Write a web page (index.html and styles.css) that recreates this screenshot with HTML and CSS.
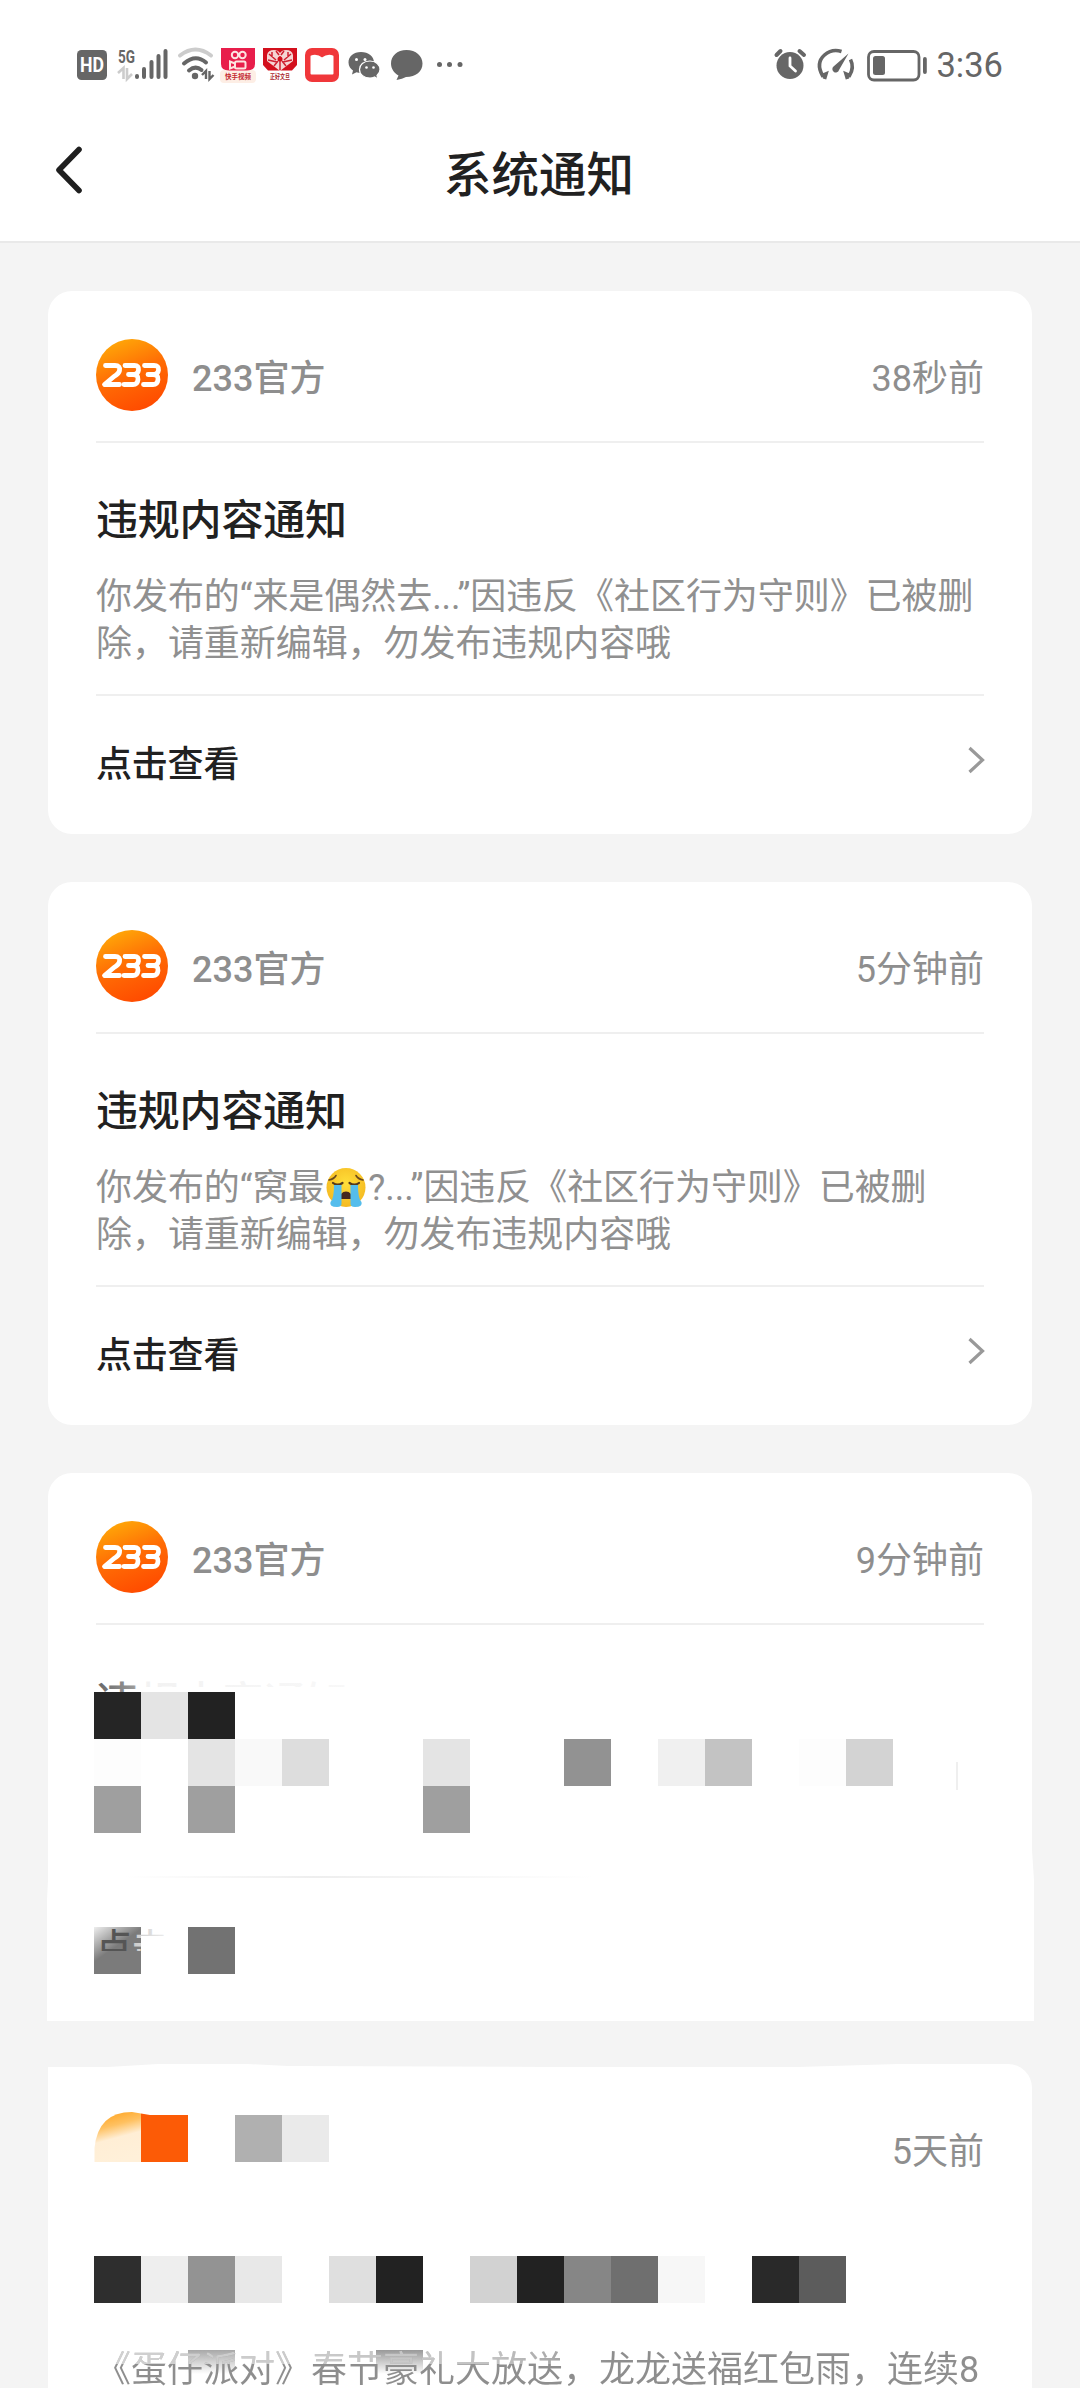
FILE: index.html
```html
<!DOCTYPE html>
<html lang="zh-CN">
<head>
<meta charset="utf-8">
<title>系统通知</title>
<link rel="stylesheet" href="styles.css">
</head>
<body>
<svg width="0" height="0" class="defs" aria-hidden="true">
  <defs>
    <linearGradient id="sun" x1="0.2" y1="0" x2="0.6" y2="1">
      <stop offset="0" stop-color="#ffac08"/><stop offset="0.5" stop-color="#ff6d05"/><stop offset="1" stop-color="#ff4b00"/>
    </linearGradient>
    <symbol id="logo" viewBox="0 0 72 72">
      <circle cx="36" cy="36" r="36" fill="url(#sun)"/>
      <g fill="none" stroke="#fff" stroke-width="4.800" stroke-linejoin="round" stroke-linecap="round">
        <path d="M9.500 26.500H19Q24.500 26.500 23.500 31.500Q23 34.500 18 37.500L8.500 45.500H23.500"/>
        <path d="M29 26.500H38.500Q43 26.500 42.500 31Q42 35.500 37 35.500H32.500M37 35.500Q42.500 35.500 42 40.500Q41.500 45.500 37 45.500H28"/>
        <path d="M48.500 26.500H58Q63 26.500 62.500 31Q62 35.500 57 35.500H52M57 35.500Q62.500 35.500 62 40.500Q61.500 45.500 57 45.500H47.500"/>
      </g>
    </symbol>
    <symbol id="next" viewBox="0 0 18 28"><path d="M2.500 2L15.500 14L2.500 26" fill="none" stroke="#999" stroke-width="3.200"/></symbol>
  </defs>
</svg>

<header class="top">
  <div class="status">
    <svg class="status-left" width="400" height="48" viewBox="72 40 400 48">
      <rect x="77" y="50" width="30" height="30" rx="4.500" fill="#666"/>
      <text x="92" y="71.500" class="hd" textLength="24" lengthAdjust="spacingAndGlyphs">HD</text>
      <text x="118" y="63" class="net" textLength="17" lengthAdjust="spacingAndGlyphs">5G</text>
      <path d="M118 73L123.500 68V79M127 68V79L132 74" fill="none" stroke="#ccc" stroke-width="2.600"/>
      <g stroke="#666" stroke-width="4" stroke-linecap="round">
        <path d="M137 76V77M144 69V77M151.500 62V77M158.500 56V77M165.500 51V77"/>
      </g>
      <g fill="none" stroke-width="4" stroke-linecap="round">
        <path d="M180 55.500Q195.500 43.500 211 55.500" stroke="#ccc"/>
        <path d="M184 63.500Q195.500 53.500 206 62.500" stroke="#666"/>
        <path d="M189 70.500Q195.500 65 201.500 70" stroke="#666"/>
      </g>
      <circle cx="195" cy="76" r="3.200" fill="#666"/>
      <path d="M202 75L206 71V79M209.500 71V79L213.500 75" fill="none" stroke="#666" stroke-width="2.400"/>

      <rect x="220" y="70" width="36" height="13" rx="4" fill="#fdeee5"/>
      <path d="M221 48H255V64Q255 70.500 247 70.500H229Q221 70.500 221 64Z" fill="#e81e4b"/>
      <g fill="none" stroke="#fde3e0" stroke-width="2">
        <circle cx="235" cy="55" r="3.200"/><circle cx="242.500" cy="55" r="3.200"/>
        <rect x="235" y="61.500" width="10.500" height="7" rx="1.500"/><path d="M235 63.500L230 61.500V68.500L235 66.500"/>
      </g>
      <text x="238" y="78.500" class="tiny red" textLength="26" lengthAdjust="spacingAndGlyphs">快手视频</text>

      <path d="M263 48H297V65L292 70.500H268L263 65Z" fill="#d3101d"/>
      <path d="M280 71L267 61V55Q268 50 274 50Q278 50 280 53Q282 50 286 50Q292 50 293 55V61Z" fill="#f5d5d3"/>
      <path d="M269 54L276 60M276 51L279 55M291 54L284 60M284 51L281 55M268 60L277 62M292 60L283 62M274 66L278 61M286 66L282 61M280 56V70M272 52V57M288 52V57" stroke="#cf2030" stroke-width="1.500" fill="none"/>
      <circle cx="280" cy="59" r="2.500" fill="#d3101d"/>
      <text x="280" y="78.500" class="tiny dark" textLength="20" lengthAdjust="spacingAndGlyphs">正好文旦</text>

      <rect x="305" y="48" width="34" height="34" rx="7" fill="#f0373a"/>
      <path d="M311.500 56.500Q316.500 54.500 322 58.500Q328 54.500 332.500 56.500V73.500H311.500Z" fill="#fff" stroke="#fff" stroke-width="2" stroke-linejoin="round"/>

      <path d="M361 52C353.500 52 348.500 56.500 348.500 62.500C348.500 66 350.500 69 353 70.500L352 74.500L356.500 72.200Q359 73 361.500 72.800C369 72.500 374 68 374 62.500C374 56.500 368.500 52 361 52Z" fill="#666"/>
      <path d="M370 61C363.500 61 359.500 65 359.500 69.500C359.500 74.500 364 78 370 78Q372.500 78 374.500 77L378 79L377 75.500Q380 73 380 69.500C380 65 376 61 370 61Z" fill="#666" stroke="#fff" stroke-width="1.200"/>
      <g fill="#fff"><circle cx="356.500" cy="59.500" r="1.500"/><circle cx="365" cy="59.500" r="1.500"/><circle cx="366.500" cy="67.500" r="1.300"/><circle cx="373.500" cy="67.500" r="1.300"/></g>
      <path d="M406.500 50C397 50 391 56 391 63.500C391 68.500 394 73 398.500 75.500L396.500 80Q402.500 79 406 77C416 77 422.500 71.500 422.500 63.500C422.500 56 416 50 406.500 50Z" fill="#666"/>
      <g fill="#666"><circle cx="439.500" cy="64.500" r="2.500"/><circle cx="449.500" cy="64.500" r="2.500"/><circle cx="460" cy="64.500" r="2.500"/></g>
    </svg>
    <div class="status-right">
      <svg width="160" height="40" viewBox="770 45 160 40">
        <circle cx="791" cy="65.500" r="13.500" fill="#666"/>
        <path d="M777.500 55L781.500 51M800.500 51L805 55" stroke="#666" stroke-width="4" stroke-linecap="round"/>
        <path d="M791 58V66L796.500 71" fill="none" stroke="#fff" stroke-width="2.800" stroke-linecap="round"/>
        <g fill="none" stroke="#666" stroke-width="3.600">
          <path d="M825.500 79L827 74L823.500 75.500Q816.500 63 825.500 55Q833 48.500 842.500 51.500"/>
          <path d="M851.500 59.500Q855.500 67.500 850.500 75.500L847 74L848.500 79"/>
        </g>
        <path d="M849.500 53.500L840 70A3.400 3.400 0 1 1 834.500 66.500Z" fill="#666"/>
        <rect x="869.500" y="51.500" width="50.500" height="28.500" rx="5.500" fill="none" stroke="#666" stroke-width="2.800"/>
        <rect x="874" y="56" width="12" height="19" rx="2.500" fill="#666"/>
        <rect x="924" y="57" width="3.800" height="17" rx="1.900" fill="#666"/>
      </svg>
      <span class="clock">3:36</span>
    </div>
  </div>
  <div class="nav">
    <svg class="back" width="36" height="56" viewBox="0 0 36 56"><path d="M29 7.500L9 28L29 48.500" fill="none" stroke="#1f1f1f" stroke-width="5.600" stroke-linecap="round" stroke-linejoin="round"/></svg>
    <h1>系统通知</h1>
  </div>
</header>

<main class="list">
  <article class="card">
    <div class="head"><svg class="avatar"><use href="#logo"/></svg><span class="name">233官方</span><time>38秒前</time></div>
    <div class="body">
      <h2>违规内容通知</h2>
      <p>你发布的“来是偶然去...”因违反《社区行为守则》已被删<br>除，请重新编辑，勿发布违规内容哦</p>
    </div>
    <div class="action"><span>点击查看</span><svg class="next"><use href="#next"/></svg></div>
  </article>

  <article class="card">
    <div class="head"><svg class="avatar"><use href="#logo"/></svg><span class="name">233官方</span><time>5分钟前</time></div>
    <div class="body">
      <h2>违规内容通知</h2>
      <p>你发布的“窝最<svg class="emoji" viewBox="0 0 40 40" role="img" aria-label="大哭">
        <defs><radialGradient id="face" cx="0.5" cy="0.4" r="0.6"><stop offset="0" stop-color="#ffdf3a"/><stop offset="1" stop-color="#f5b921"/></radialGradient></defs>
        <circle cx="20" cy="19.500" r="19.500" fill="url(#face)"/>
        <path d="M3 12Q8 11 10 7.500M37 12Q32 11 30 7.500" fill="none" stroke="#6b4a1c" stroke-width="1.600" stroke-linecap="round"/>
        <path d="M7 15Q11.500 18.500 16.500 15M23.500 15Q28.500 18.500 33 15" fill="none" stroke="#54391c" stroke-width="2.200" stroke-linecap="round"/>
        <path d="M14 31Q14 23.500 20 23.500Q26 23.500 26 31Z" fill="#46281e"/>
        <path d="M8 17H15.500V35Q16 39 11 39Q3 39 4.500 34Q8 31 8 17ZM32 17H24.500V35Q24 39 29 39Q37 39 35.500 34Q32 31 32 17Z" fill="#55bdec"/>
      </svg>?...”因违反《社区行为守则》已被删<br>除，请重新编辑，勿发布违规内容哦</p>
    </div>
    <div class="action"><span>点击查看</span><svg class="next"><use href="#next"/></svg></div>
  </article>

  <article class="card masked">
    <div class="head"><svg class="avatar"><use href="#logo"/></svg><span class="name">233官方</span><time>9分钟前</time></div>
    <svg class="mosaic" width="987" height="397" viewBox="47 1624 987 397">
      <defs>
        <linearGradient id="fadeTitle" gradientUnits="userSpaceOnUse" x1="96" y1="0" x2="350" y2="0">
          <stop offset="0" stop-color="#666"/><stop offset="0.150" stop-color="#999"/><stop offset="0.170" stop-color="#f2f2f2"/><stop offset="1" stop-color="#f8f8f8"/>
        </linearGradient>
        <linearGradient id="fadeAction" gradientUnits="userSpaceOnUse" x1="96" y1="0" x2="168" y2="0">
          <stop offset="0" stop-color="#555"/><stop offset="0.480" stop-color="#555"/><stop offset="0.520" stop-color="#ccc"/><stop offset="1" stop-color="#eee"/>
        </linearGradient>
        <linearGradient id="fadeTile" x1="0" y1="0" x2="0.350" y2="0.500"><stop offset="0" stop-color="#eee"/><stop offset="1" stop-color="#7b7b7b"/></linearGradient>
        <linearGradient id="fadeLine"><stop offset="0" stop-color="#fff"/><stop offset="0.400" stop-color="#eee"/><stop offset="1" stop-color="#fff"/></linearGradient>
        <clipPath id="cutTitle"><path d="M90 1670H350V1687H137V1692H90Z"/></clipPath>
        <clipPath id="cutAction"><path d="M90 1920H180V1936H141V1951H90Z"/></clipPath>
      </defs>
      <path d="M48 1624H1032V1850L1034 1880V2021H47V1900L48 1880Z" fill="#fff"/>
      <text x="96" y="1717" class="ghost-title" fill="url(#fadeTitle)" clip-path="url(#cutTitle)">违规内容通知</text>
      <g shape-rendering="crispEdges">
        <path d="M94 1692h47v47h-47z" fill="#252525"/><path d="M141 1692h47v47h-47z" fill="#e4e4e4"/><path d="M188 1692h47v47h-47z" fill="#222"/>
        <path d="M94 1739h47v47h-47zM799 1739h47v47h-47z" fill="#fdfdfd"/><path d="M188 1739h47v47h-47zM423 1739h47v47h-47z" fill="#e4e4e4"/>
        <path d="M235 1739h47v47h-47z" fill="#f9f9f9"/><path d="M282 1739h47v47h-47z" fill="#ddd"/><path d="M564 1739h47v47h-47z" fill="#929292"/>
        <path d="M658 1739h47v47h-47z" fill="#f0f0f0"/><path d="M705 1739h47v47h-47z" fill="#c3c3c3"/><path d="M846 1739h47v47h-47z" fill="#d3d3d3"/>
        <path d="M94 1786h47v47h-47zM188 1786h47v47h-47zM423 1786h47v47h-47z" fill="#9f9f9f"/>
        <path d="M94 1927h47v47h-47z" fill="url(#fadeTile)"/><path d="M188 1927h47v47h-47z" fill="#727272"/>
      </g>
      <path d="M956 1762h2v28h-2z" fill="#efefef"/>
      <path d="M125 1876h470v2h-470z" fill="url(#fadeLine)"/>
      <text x="96" y="1960" class="ghost-action" fill="url(#fadeAction)" clip-path="url(#cutAction)">点击</text>
    </svg>
  </article>

  <article class="card last">
    <div class="head">
      <svg class="mosaic-head" width="240" height="56" viewBox="94 2111 240 56">
        <defs>
          <linearGradient id="fadeAvatar" x1="0.200" y1="0" x2="0.450" y2="1"><stop offset="0" stop-color="#ffa21c"/><stop offset="0.300" stop-color="#ffc161"/><stop offset="0.550" stop-color="#ffeed5"/><stop offset="1" stop-color="#fff0d9"/></linearGradient>
        </defs>
        <path d="M94.500 2162V2148Q98 2112 132 2112L141 2113.500V2162Z" fill="url(#fadeAvatar)"/>
        <path d="M141 2113.500L150 2115H188V2162H141Z" fill="#fc5b06"/>
        <path d="M235 2115h47v47h-47z" fill="#b0b0b0"/><path d="M282 2115h47v47h-47z" fill="#eaeaea"/>
      </svg>
      <time>5天前</time>
    </div>
    <div class="tiles">
      <i class="t1"></i><i class="t2"></i><i class="t3"></i><i class="t4"></i><i></i><i class="t5"></i><i class="t6"></i><i></i><i class="t7"></i><i class="t6"></i><i class="t8"></i><i class="t9"></i><i class="t10"></i><i></i><i class="t11"></i><i class="t12"></i>
    </div>
    <div class="promo"><p>《蛋仔派对》春节豪礼大放送，龙龙送福红包雨，连续8</p></div>
  </article>
</main>
</body>
</html>
```

FILE: styles.css
```css
* { box-sizing: border-box; }
html, body { margin: 0; }
body {
  width: 1080px;
  height: 2388px;
  overflow: hidden;
  background: #f4f4f4;
  font-family: Roboto, "Noto Sans CJK SC", sans-serif;
  color: #212121;
}
svg { display: block; flex: none; }
h1, h2, p { margin: 0; font-weight: 500; }
.defs { position: absolute; }

.top { height: 243px; background: #fff; border-bottom: 2px solid #e9e9e9; }
.status { height: 105px; padding: 40px 77px 0 72px; display: flex; justify-content: space-between; }
.status-right { display: flex; gap: 7px; padding-top: 5px; }
.clock { font-size: 34.500px; line-height: 40px; color: #666; }
.hd { font: 700 20px Roboto, sans-serif; fill: #fff; text-anchor: middle; }
.net { font: 700 18px Roboto, sans-serif; fill: #666; }
.tiny { font: 700 6.500px "Noto Sans CJK SC", sans-serif; text-anchor: middle; }
.red { fill: #c3272d; }
.dark { fill: #a8242b; }
.nav { height: 136px; display: grid; grid-template-columns: 158px 1fr 160px; }
.back { margin: 37px 0 0 50px; }
.nav h1 { font-size: 47.500px; line-height: 60px; padding-top: 41px; text-align: center; letter-spacing: 0; }

.list { padding: 48px 48px 0; display: flex; flex-direction: column; gap: 48px; }
.card { height: 543px; flex: none; background: #fff; border-radius: 24px; padding: 48px; }
.head { height: 104px; border-bottom: 2px solid #efefef; display: flex; align-items: flex-start; }
.avatar { width: 72px; height: 72px; }
.name, .head time { font-size: 36px; line-height: 72px; color: #8e8e8e; padding-top: 4px; }
.name { margin-left: 24px; font-weight: 500; }
.head time { margin-left: auto; }
.body { height: 253px; padding-top: 53px; border-bottom: 2px solid #efefef; }
.body h2 { font-size: 42px; line-height: 50px; letter-spacing: -0.200px; }
.body p { margin-top: 28px; font-size: 36px; line-height: 47px; font-weight: 400; letter-spacing: -0.060px; white-space: nowrap; color: #909090; }
.emoji { display: inline-block; width: 40px; height: 40px; margin: 0 2px; vertical-align: -8px; }
.action { height: 90px; padding-top: 24px; display: flex; justify-content: space-between; font-size: 36px; line-height: 90px; font-weight: 500; }
.next { width: 18px; height: 28px; margin: 26px -1px 0 0; }
.action span { line-height: 90px; letter-spacing: -0.200px; }

.masked { height: 548px; background: none; padding: 0; }
.masked .head { height: 151px; padding: 48px 48px 0; background: #fff; border: 0; border-radius: 24px 24px 0 0; position: relative; }
.masked .head::after { content: ""; position: absolute; left: 48px; right: 48px; bottom: -1px; height: 2px; background: #efefef; }
.mosaic { margin: 0 -2px 0 -1px; }
.ghost-title { font: 500 42px "Noto Sans CJK SC", sans-serif; }
.ghost-action { font: 500 36px "Noto Sans CJK SC", sans-serif; }

.last {
  margin-top: -5px;
  height: 400px;
  border-radius: 0 24px 0 0;
  clip-path: polygon(0 3px, 60px 3px, 110px 0, 200px 0, 240px 2px, 500px 3px, 750px 3px, 850px 0, 984px 0, 984px 100%, 0 100%);
}
.last .head { border: 0; height: 144px; }
.mosaic-head { margin: -1px 0 0 -2px; }
.tiles { display: flex; height: 47px; margin-left: -2px; }
.tiles i { width: 47px; flex: none; }
.t1 { background: #2e2e2e; } .t2 { background: #eee; } .t3 { background: #939393; } .t4 { background: #e8e8e8; }
.t5 { background: #dfdfdf; } .t6 { background: #222; } .t7 { background: #d2d2d2; } .t8 { background: #868686; }
.t9 { background: #6f6f6f; } .t10 { background: #f7f7f7; } .t11 { background: #292929; } .t12 { background: #5c5c5c; }
.promo {
  height: 60px;
  margin: 47px -20px 0 -2px;
  padding-left: 1px;
  background:
    linear-gradient(#a8a8a8, #fff) 94px 0 / 47px 24px no-repeat,
    linear-gradient(#999, #fff) 282px 0 / 47px 24px no-repeat;
}
.promo p {
  font-size: 36px; line-height: 40px; font-weight: 400; white-space: nowrap; color: transparent;
  background: linear-gradient(90deg, #fff9 0, #fff7 400px, #fff0 520px) 0 0 / 100% 14px no-repeat, #8e8e8e;
  -webkit-background-clip: text;
  background-clip: text;
}
```
